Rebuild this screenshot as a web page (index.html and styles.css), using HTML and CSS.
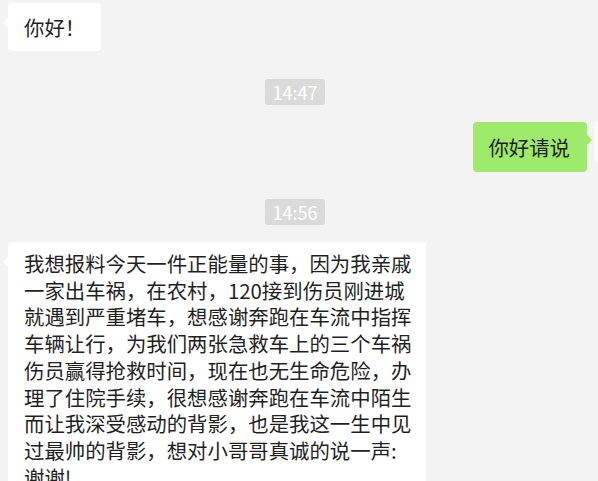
FILE: index.html
```html
<!DOCTYPE html>
<html lang="zh-CN">
<head>
  <meta charset="UTF-8">
  <meta name="viewport" content="width=device-width, initial-scale=1.0">
  <title>聊天记录</title>
  <link rel="stylesheet" href="styles.css">
</head>
<body>
  <div class="chat">
    <div class="row left">
      <div class="bubble">你好！</div>
    </div>

    <div class="time"><span>14:47</span></div>

    <div class="row right">
      <div class="bubble">你好请说</div>
      <div class="avatar"></div>
    </div>

    <div class="time"><span>14:56</span></div>

    <div class="row left">
      <div class="bubble long">我想报料今天一件正能量的事，因为我亲戚一家出车祸，在农村，120接到伤员刚进城就遇到严重堵车，想感谢奔跑在车流中指挥车辆让行，为我们两张急救车上的三个车祸伤员赢得抢救时间，现在也无生命危险，办理了住院手续，很想感谢奔跑在车流中陌生而让我深受感动的背影，也是我这一生中见过最帅的背影，想对小哥哥真诚的说一声:谢谢!</div>
    </div>
  </div>
</body>
</html>
```

FILE: styles.css
```css
* {
  margin: 0;
  padding: 0;
  box-sizing: border-box;
}

body {
  background-color: #f3f3f3;
  color: #1f1f1f;
  font-family: "Noto Sans CJK SC", "Noto Sans", sans-serif;
  height: 481px;
  overflow: hidden;
}

.chat {
  display: flex;
  flex-direction: column;
  padding: 3px 0 0 8px;
}

.row {
  display: flex;
  align-items: flex-start;
}

.row.right {
  justify-content: flex-end;
}

.bubble {
  position: relative;
  background-color: #fff;
  border-radius: 4px;
  padding: 10px 16px;
  font-size: 20.4px;
  line-height: 28px;
}

.left .bubble::before {
  content: "";
  position: absolute;
  left: -5px;
  top: 15px;
  border: 5px solid transparent;
  border-left-width: 0;
  border-right-color: #fff;
}

.right .bubble {
  background-color: #9eea6a;
  padding: 11px 17px 11px 15px;
  margin-right: 7px;
}

.right .bubble::after {
  content: "";
  position: absolute;
  right: -5px;
  top: 13px;
  border: 5px solid transparent;
  border-right-width: 0;
  border-left-color: #9eea6a;
}

.avatar {
  width: 4px;
  height: 40px;
  background-color: #fafafa;
}

.bubble.long {
  width: 418px;
  padding: 8px 12px 0 16px;
  line-height: 26.7px;
}

.time {
  display: flex;
  justify-content: center;
  padding-right: 16px;
  margin: 28px 0 17px;
}

.time span {
  background-color: #dadada;
  color: #fff;
  font-size: 18px;
  line-height: 26px;
  padding: 0 8px;
  border-radius: 3px;
}

.time + .row.left {
  margin-top: 0;
}

.row.right + .time {
  margin-top: 27px;
}
```
